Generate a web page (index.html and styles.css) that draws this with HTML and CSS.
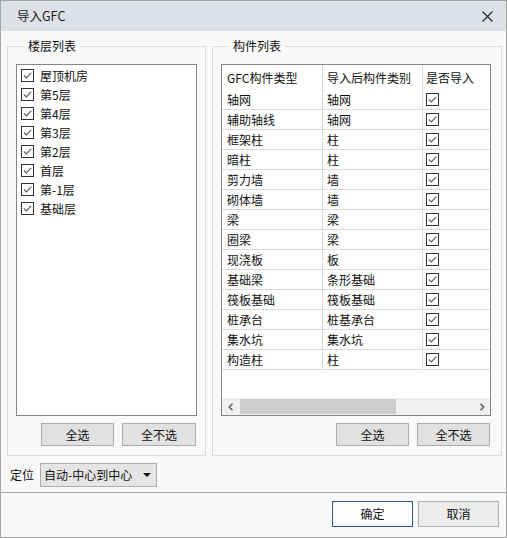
FILE: index.html
```html
<!DOCTYPE html>
<html lang="zh-CN">
<head>
<meta charset="utf-8">
<title>导入GFC</title>
<link rel="stylesheet" href="styles.css">
</head>
<body>
<div class="window">
  <div class="titlebar">
    <span class="title">导入GFC</span>
    <span class="close"><svg width="11" height="11" viewBox="0 0 11 11"><path d="M0.5 0.5 L10.5 10.5 M10.5 0.5 L0.5 10.5" stroke="#222" stroke-width="1.1" fill="none"/></svg></span>
  </div>
  <div class="body">
    <div class="groups">
      <fieldset class="group group-left">
        <legend>楼层列表</legend>
        <ul class="floor-list">
          <li><span class="cb"><svg width="13" height="13" viewBox="0 0 13 13"><rect x="0.5" y="0.5" width="12" height="12" fill="#fff" stroke="#333"/><path d="M2.8 6.4 L5.3 8.9 L10.2 3.8" stroke="#555" stroke-width="1.1" fill="none"/></svg></span>屋顶机房</li>
          <li><span class="cb"><svg width="13" height="13" viewBox="0 0 13 13"><rect x="0.5" y="0.5" width="12" height="12" fill="#fff" stroke="#333"/><path d="M2.8 6.4 L5.3 8.9 L10.2 3.8" stroke="#555" stroke-width="1.1" fill="none"/></svg></span>第5层</li>
          <li><span class="cb"><svg width="13" height="13" viewBox="0 0 13 13"><rect x="0.5" y="0.5" width="12" height="12" fill="#fff" stroke="#333"/><path d="M2.8 6.4 L5.3 8.9 L10.2 3.8" stroke="#555" stroke-width="1.1" fill="none"/></svg></span>第4层</li>
          <li><span class="cb"><svg width="13" height="13" viewBox="0 0 13 13"><rect x="0.5" y="0.5" width="12" height="12" fill="#fff" stroke="#333"/><path d="M2.8 6.4 L5.3 8.9 L10.2 3.8" stroke="#555" stroke-width="1.1" fill="none"/></svg></span>第3层</li>
          <li><span class="cb"><svg width="13" height="13" viewBox="0 0 13 13"><rect x="0.5" y="0.5" width="12" height="12" fill="#fff" stroke="#333"/><path d="M2.8 6.4 L5.3 8.9 L10.2 3.8" stroke="#555" stroke-width="1.1" fill="none"/></svg></span>第2层</li>
          <li><span class="cb"><svg width="13" height="13" viewBox="0 0 13 13"><rect x="0.5" y="0.5" width="12" height="12" fill="#fff" stroke="#333"/><path d="M2.8 6.4 L5.3 8.9 L10.2 3.8" stroke="#555" stroke-width="1.1" fill="none"/></svg></span>首层</li>
          <li><span class="cb"><svg width="13" height="13" viewBox="0 0 13 13"><rect x="0.5" y="0.5" width="12" height="12" fill="#fff" stroke="#333"/><path d="M2.8 6.4 L5.3 8.9 L10.2 3.8" stroke="#555" stroke-width="1.1" fill="none"/></svg></span>第-1层</li>
          <li><span class="cb"><svg width="13" height="13" viewBox="0 0 13 13"><rect x="0.5" y="0.5" width="12" height="12" fill="#fff" stroke="#333"/><path d="M2.8 6.4 L5.3 8.9 L10.2 3.8" stroke="#555" stroke-width="1.1" fill="none"/></svg></span>基础层</li>
        </ul>
        <div class="btn-row btn-row-left">
          <button class="btn btn-a">全选</button>
          <button class="btn btn-b">全不选</button>
        </div>
      </fieldset>
      <fieldset class="group group-right">
        <legend>构件列表</legend>
        <div class="table-box">
          <div class="grid-area">
            <div class="row head"><div class="c c1">GFC构件类型</div><div class="c c2">导入后构件类别</div><div class="c c3">是否导入</div></div>
            <div class="row"><div class="c c1">轴网</div><div class="c c2">轴网</div><div class="c c3"><svg width="13" height="13" viewBox="0 0 13 13"><rect x="0.5" y="0.5" width="12" height="12" fill="#fff" stroke="#333"/><path d="M2.8 6.4 L5.3 8.9 L10.2 3.8" stroke="#555" stroke-width="1.1" fill="none"/></svg></div></div>
            <div class="row"><div class="c c1">辅助轴线</div><div class="c c2">轴网</div><div class="c c3"><svg width="13" height="13" viewBox="0 0 13 13"><rect x="0.5" y="0.5" width="12" height="12" fill="#fff" stroke="#333"/><path d="M2.8 6.4 L5.3 8.9 L10.2 3.8" stroke="#555" stroke-width="1.1" fill="none"/></svg></div></div>
            <div class="row"><div class="c c1">框架柱</div><div class="c c2">柱</div><div class="c c3"><svg width="13" height="13" viewBox="0 0 13 13"><rect x="0.5" y="0.5" width="12" height="12" fill="#fff" stroke="#333"/><path d="M2.8 6.4 L5.3 8.9 L10.2 3.8" stroke="#555" stroke-width="1.1" fill="none"/></svg></div></div>
            <div class="row"><div class="c c1">暗柱</div><div class="c c2">柱</div><div class="c c3"><svg width="13" height="13" viewBox="0 0 13 13"><rect x="0.5" y="0.5" width="12" height="12" fill="#fff" stroke="#333"/><path d="M2.8 6.4 L5.3 8.9 L10.2 3.8" stroke="#555" stroke-width="1.1" fill="none"/></svg></div></div>
            <div class="row"><div class="c c1">剪力墙</div><div class="c c2">墙</div><div class="c c3"><svg width="13" height="13" viewBox="0 0 13 13"><rect x="0.5" y="0.5" width="12" height="12" fill="#fff" stroke="#333"/><path d="M2.8 6.4 L5.3 8.9 L10.2 3.8" stroke="#555" stroke-width="1.1" fill="none"/></svg></div></div>
            <div class="row"><div class="c c1">砌体墙</div><div class="c c2">墙</div><div class="c c3"><svg width="13" height="13" viewBox="0 0 13 13"><rect x="0.5" y="0.5" width="12" height="12" fill="#fff" stroke="#333"/><path d="M2.8 6.4 L5.3 8.9 L10.2 3.8" stroke="#555" stroke-width="1.1" fill="none"/></svg></div></div>
            <div class="row"><div class="c c1">梁</div><div class="c c2">梁</div><div class="c c3"><svg width="13" height="13" viewBox="0 0 13 13"><rect x="0.5" y="0.5" width="12" height="12" fill="#fff" stroke="#333"/><path d="M2.8 6.4 L5.3 8.9 L10.2 3.8" stroke="#555" stroke-width="1.1" fill="none"/></svg></div></div>
            <div class="row"><div class="c c1">圈梁</div><div class="c c2">梁</div><div class="c c3"><svg width="13" height="13" viewBox="0 0 13 13"><rect x="0.5" y="0.5" width="12" height="12" fill="#fff" stroke="#333"/><path d="M2.8 6.4 L5.3 8.9 L10.2 3.8" stroke="#555" stroke-width="1.1" fill="none"/></svg></div></div>
            <div class="row"><div class="c c1">现浇板</div><div class="c c2">板</div><div class="c c3"><svg width="13" height="13" viewBox="0 0 13 13"><rect x="0.5" y="0.5" width="12" height="12" fill="#fff" stroke="#333"/><path d="M2.8 6.4 L5.3 8.9 L10.2 3.8" stroke="#555" stroke-width="1.1" fill="none"/></svg></div></div>
            <div class="row"><div class="c c1">基础梁</div><div class="c c2">条形基础</div><div class="c c3"><svg width="13" height="13" viewBox="0 0 13 13"><rect x="0.5" y="0.5" width="12" height="12" fill="#fff" stroke="#333"/><path d="M2.8 6.4 L5.3 8.9 L10.2 3.8" stroke="#555" stroke-width="1.1" fill="none"/></svg></div></div>
            <div class="row"><div class="c c1">筏板基础</div><div class="c c2">筏板基础</div><div class="c c3"><svg width="13" height="13" viewBox="0 0 13 13"><rect x="0.5" y="0.5" width="12" height="12" fill="#fff" stroke="#333"/><path d="M2.8 6.4 L5.3 8.9 L10.2 3.8" stroke="#555" stroke-width="1.1" fill="none"/></svg></div></div>
            <div class="row"><div class="c c1">桩承台</div><div class="c c2">桩基承台</div><div class="c c3"><svg width="13" height="13" viewBox="0 0 13 13"><rect x="0.5" y="0.5" width="12" height="12" fill="#fff" stroke="#333"/><path d="M2.8 6.4 L5.3 8.9 L10.2 3.8" stroke="#555" stroke-width="1.1" fill="none"/></svg></div></div>
            <div class="row"><div class="c c1">集水坑</div><div class="c c2">集水坑</div><div class="c c3"><svg width="13" height="13" viewBox="0 0 13 13"><rect x="0.5" y="0.5" width="12" height="12" fill="#fff" stroke="#333"/><path d="M2.8 6.4 L5.3 8.9 L10.2 3.8" stroke="#555" stroke-width="1.1" fill="none"/></svg></div></div>
            <div class="row"><div class="c c1">构造柱</div><div class="c c2">柱</div><div class="c c3"><svg width="13" height="13" viewBox="0 0 13 13"><rect x="0.5" y="0.5" width="12" height="12" fill="#fff" stroke="#333"/><path d="M2.8 6.4 L5.3 8.9 L10.2 3.8" stroke="#555" stroke-width="1.1" fill="none"/></svg></div></div>
          </div>
          <div class="hscroll">
            <span class="arrow-btn"><svg width="6" height="8" viewBox="0 0 6 8"><path d="M4.5 0.8 L1.3 4 L4.5 7.2" stroke="#606060" stroke-width="1.5" fill="none"/></svg></span>
            <div class="track"><div class="thumb" style="width:156px"></div></div>
            <span class="arrow-btn"><svg width="6" height="8" viewBox="0 0 6 8"><path d="M1.5 0.8 L4.7 4 L1.5 7.2" stroke="#606060" stroke-width="1.5" fill="none"/></svg></span>
          </div>
        </div>
        <div class="btn-row btn-row-right">
          <button class="btn btn-a">全选</button>
          <button class="btn btn-a">全不选</button>
        </div>
      </fieldset>
    </div>
    <div class="locate-row">
      <span class="locate-label">定位</span>
      <div class="select"><span class="select-text">自动-中心到中心</span><span class="select-arrow"></span></div>
    </div>
  </div>
  <div class="footer">
    <button class="btn dlg-btn primary">确定</button>
    <button class="btn dlg-btn">取消</button>
  </div>
</div>
</body>
</html>
```

FILE: styles.css
```css
* { box-sizing: border-box; }
html, body { margin: 0; padding: 0; }
body {
  font-family: "Noto Sans CJK SC", "Noto Sans", sans-serif;
  font-size: 12px;
  color: #111;
  background: #f9f9f9;
}
.window {
  width: 507px;
  height: 538px;
  border: 1px solid #a6a6a6;
  background: #f9f9f9;
  display: flex;
  flex-direction: column;
}
.titlebar {
  height: 30px;
  flex: none;
  background: #dde1e7;
  display: flex;
  align-items: center;
  justify-content: space-between;
  padding: 0 13px 0 16px;
}
.title { font-size: 12.5px; color: #1a1a1a; line-height: 16px; }
.close { display: flex; align-items: center; height: 11px; }
.close svg { display: block; }

.body {
  padding: 7px 4px 5px 6px;
  flex: none;
}
.groups {
  display: flex;
  gap: 6px;
}
.group {
  margin: 0;
  padding: 0 0 9px 0;
  border: 1px solid #dcdcdc;
  min-width: 0;
}
.group legend {
  margin-left: 16px;
  padding: 0 4px;
  font-size: 12px;
  line-height: 16px;
  color: #111;
}
.group-left { width: 199px; }
.group-right { width: 290px; }

.floor-list {
  list-style: none;
  margin: 10px 8px 0 8px;
  padding: 1px 0 0 4px;
  height: 352px;
  background: #fff;
  border: 1px solid #828790;
}
.floor-list li {
  height: 19px;
  display: flex;
  align-items: center;
  gap: 6px;
  line-height: 19px;
}
.cb { display: flex; }
.cb svg, .c3 svg { display: block; }

.btn-row {
  display: flex;
  justify-content: flex-end;
  gap: 8px;
  margin-top: 7px;
}
.btn-row-left { padding-right: 9px; }
.btn-row-right { padding-right: 11px; }
.btn {
  font-family: "Noto Sans CJK SC", "Noto Sans", sans-serif;
  font-size: 12px;
  color: #111;
  height: 23px;
  padding: 0;
  background: #e1e1e1;
  border: 1px solid #adadad;
  border-radius: 0;
  line-height: 20px;
}
.btn-a { width: 73px; }
.btn-b { width: 74px; }

.table-box {
  margin: 10px 10px 0 8px;
  height: 352px;
  border: 1px solid #828790;
  background: #fff;
  display: flex;
  flex-direction: column;
}
.grid-area {
  flex: 1;
  overflow: hidden;
}
.row {
  display: grid;
  grid-template-columns: 101px 100px 67px;
  height: 20px;
  border-bottom: 1px solid #dadada;
}
.row.head {
  height: 25px;
  border-bottom: none;
}
.c {
  display: flex;
  align-items: center;
  white-space: nowrap;
  overflow: hidden;
  line-height: 16px;
}
.c1 { padding-left: 5px; border-right: 1px solid #dadada; }
.c2 { padding-left: 4px; border-right: 1px solid #dadada; }
.c3 { padding-left: 3px; }
.head .c { padding-top: 1px; }

.hscroll {
  height: 17px;
  flex: none;
  background: #f0f0f0;
  display: flex;
  align-items: center;
}
.arrow-btn {
  width: 17px;
  height: 17px;
  display: flex;
  align-items: center;
  justify-content: center;
  flex: none;
}
.track {
  flex: 1;
  height: 17px;
  display: flex;
  align-items: center;
  padding-left: 1px;
}
.thumb {
  height: 15px;
  background: #cdcdcd;
}

.locate-row {
  display: flex;
  align-items: center;
  margin-top: 7px;
  height: 24px;
}
.locate-label {
  margin-left: 3px;
  margin-right: 6px;
  line-height: 16px;
}
.select {
  width: 117px;
  height: 24px;
  border: 1px solid #acacac;
  background: #e5e5e5;
  display: flex;
  align-items: center;
  justify-content: space-between;
  padding: 0 5px 0 3px;
}
.select-text { line-height: 16px; }
.select-arrow {
  width: 0;
  height: 0;
  border-left: 4px solid transparent;
  border-right: 4px solid transparent;
  border-top: 4px solid #111;
}

.footer {
  flex: 1;
  border-top: 1px solid #a6a6a6;
  display: flex;
  justify-content: flex-end;
  gap: 5px;
  padding: 8px 7px 0 0;
  background: #f9f9f9;
}
.dlg-btn {
  width: 81px;
  height: 26px;
  background: #ececec;
  font-size: 12px;
}
.dlg-btn.primary {
  background: #fdfdfd;
  border: 1px solid #2b5797;
}
```
